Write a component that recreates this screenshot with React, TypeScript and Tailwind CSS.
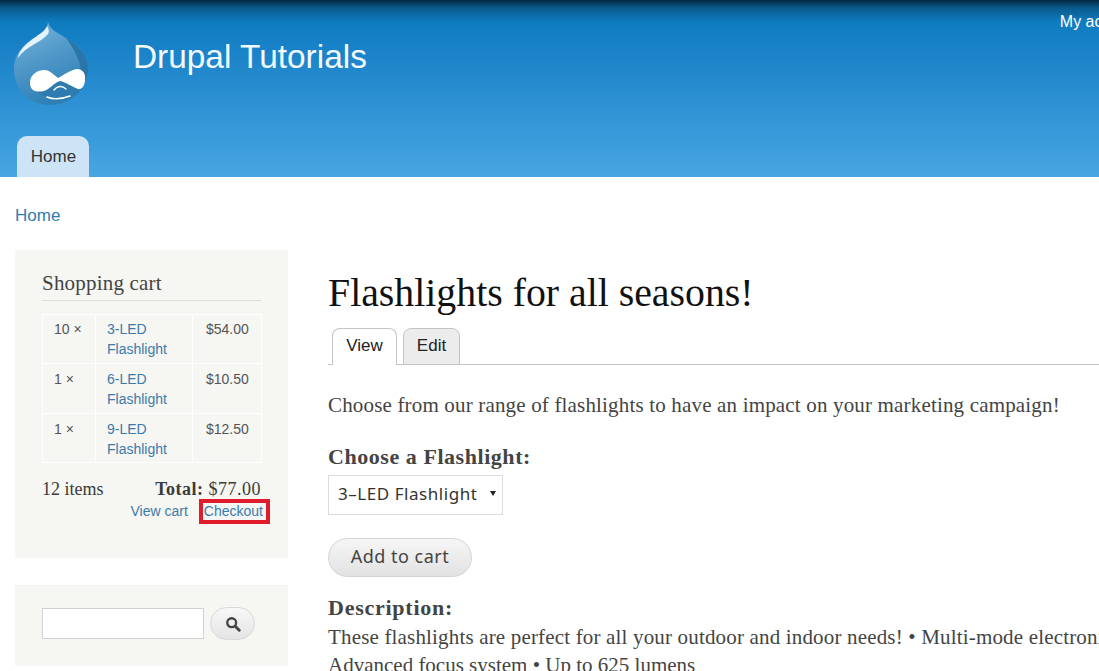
const sans = { fontFamily: '"Liberation Sans", Arial, sans-serif' };
const serif = { fontFamily: '"Liberation Serif", "Times New Roman", serif' };
const noto = { fontFamily: '"Noto Sans", sans-serif' };

function Logo() {
  return (
    <svg width="76" height="86" viewBox="13 20 76 86" className="shrink-0">
      <defs>
        <linearGradient id="dropFill" x1="0" y1="0" x2="0.4" y2="1">
          <stop offset="0" stopColor="#7cb8de" />
          <stop offset="0.5" stopColor="#5199c9" />
          <stop offset="1" stopColor="#2f7fb5" />
        </linearGradient>
      </defs>
      <path d="M48 22C50 30 58 33 66 38C78 45 88 55 88 68C88 90 70 105 51 105C30 105 14 90 14 69C14 52 26 43 36 37C42 33 47 30 48 22Z" fill="url(#dropFill)" />
      <path d="M66 38C78 45 88 55 88 68C88 78 84 86 78 92C84 80 84 62 66 38Z" fill="#2a76a9" />
      <path d="M47 26C44 34 30 38 22 49C19 53 18 56 18 58C26 46 42 42 48 34C50 31 48 28 47 26Z" fill="#e4f2fa" />
      <path d="M35 90C42 100 70 102 80 90C74 87 66 82 60 81C52 84 44 90 35 90Z" fill="#2f7aae" />
      <path d="M30 83C30 74 38 70 44 70C50 70 54 75 58 78C64 75 70 70 77 69C83 69 86 74 85 80C85 85 82 90 78 89C72 87 66 82 60 81C56 82 52 86 48 89C44 92 38 92 35 91C32 90 30 87 30 83Z" fill="#ffffff" />
      <path d="M47 97C54 100 62 99 70 96" fill="none" stroke="#ffffff" strokeWidth="1.6" strokeLinecap="round" />
      <path d="M54 90C57 86 62 85 66 89" fill="none" stroke="#ffffff" strokeWidth="1.4" strokeLinecap="round" />
    </svg>
  );
}

function CartRow({ qty, name, price, first, last }: { qty: string; name: string; price: string; first?: boolean; last?: boolean }) {
  const pad = first ? "pt-[4px]" : "pt-[5px]";
  return (
    <tr className={first || last ? "h-[49px]" : "h-[50px]"}>
      <td className={`border border-white pl-[11px] align-top w-[53px] ${pad}`}>{qty}</td>
      <td className={`border border-white pl-[11px] align-top w-[97px] text-[#3b7bab] ${pad}`}>{name}</td>
      <td className={`border border-white pl-[13px] align-top w-[69px] ${pad}`}>{price}</td>
    </tr>
  );
}

export default function App() {
  return (
    <div className="w-[1099px] h-[671px] overflow-hidden bg-white text-[#3b3b3b]" style={sans}>
      <header className="h-[177px] bg-[linear-gradient(to_bottom,#02283f_0px,#0a5a8c_8px,#0f7cc0_22px,#1a82c8_50px,#48a6e2_177px)] flex flex-col">
        <div className="flex h-[136px] shrink-0">
          <div className="pl-[13px] pt-[20px]"><Logo /></div>
          <div className="ml-[44px] pt-[37px] text-[33.4px] leading-[40px] text-[#f2faff] whitespace-nowrap">Drupal Tutorials</div>
          <div className="ml-[693px] pt-[12px] text-[16px] leading-[20px] text-white whitespace-nowrap shrink-0">My account</div>
        </div>
        <div className="h-[41px] w-[72px] ml-[17px] pl-[1px] rounded-t-[10px] bg-[#cde4f6] text-[17px] leading-[41px] text-center text-[#333]">Home</div>
      </header>

      <div className="pl-[15px] pt-[28px] text-[17px] leading-[22px] text-[#2f7dad]">Home</div>

      <div className="flex mt-[23px]">
        <aside className="w-[273px] ml-[15px] shrink-0">
          <section className="h-[308px] bg-[#f6f6f2] px-[27px] pt-[20px]">
            <h2 className="text-[21px] tracking-[0.2px] leading-[26px] h-[31px] border-b border-[#dcdcd8] text-[#444]" style={serif}>Shopping cart</h2>
            <table className="mt-[13px] w-[219px] border-collapse text-[14px] leading-[20px] text-[#555] table-fixed">
              <tbody>
                <CartRow qty="10 ×" name="3-LED Flashlight" price="$54.00" first />
                <CartRow qty="1 ×" name="6-LED Flashlight" price="$10.50" />
                <CartRow qty="1 ×" name="9-LED Flashlight" price="$12.50" last />
              </tbody>
            </table>
            <div className="flex justify-between mt-[15px] text-[18px] leading-[22px] text-[#3b3b3b]" style={serif}>
              <span>12 items</span>
              <span className="tracking-[0.5px]"><b>Total:</b> $77.00</span>
            </div>
            <div className="flex justify-end items-center -mt-[1px] -mr-[9px] text-[14px] text-[#3b7bab]">
              <span className="mr-[11px]">View cart</span>
              <span className="border-[4px] border-[#e01b2b] bg-[#f4f6f6] pl-[1px] pr-[3px] leading-[16px] h-[25px]">Checkout</span>
            </div>
          </section>
          <section className="h-[81px] mt-[27px] bg-[#f6f6f2] px-[27px] pt-[22px] flex items-start gap-[6px]">
            <div className="w-[162px] h-[31px] mt-[1px] bg-white border border-[#d2d2d2]" />
            <div className="w-[45px] h-[33px] rounded-full border border-[#d8d8d8] bg-[linear-gradient(to_bottom,#f8f8f8,#e4e4e4)] flex items-center justify-center">
              <svg width="16" height="16" viewBox="0 0 18 18"><circle cx="7.5" cy="7.5" r="5" fill="none" stroke="#444" strokeWidth="2.6" /><path d="M11.5 11.5L16 16" stroke="#444" strokeWidth="3.2" strokeLinecap="round" /></svg>
            </div>
          </section>
        </aside>

        <main className="ml-[40px] flex-1 min-w-0" style={serif}>
          <h1 className="text-[39.8px] leading-[44px] mt-[21px] text-[#111] whitespace-nowrap">Flashlights for all seasons!</h1>
          <nav className="flex items-end mt-[13px] h-[37px] border-b border-[#c4c4c4] pl-[4px] gap-[6px] text-[17px]" style={sans}>
            <span className="w-[65px] h-[37px] -mb-px bg-white border border-b-0 border-[#c4c4c4] rounded-t-[8px] text-center leading-[34px] text-[#222]">View</span>
            <span className="w-[57px] h-[37px] -mb-px bg-[#ececec] border border-[#c4c4c4] rounded-t-[8px] text-center leading-[34px] text-[#222]">Edit</span>
          </nav>
          <p className="mt-[28px] text-[21px] tracking-[0.17px] leading-[24px] text-[#444] whitespace-nowrap">Choose from our range of flashlights to have an impact on your marketing campaign!</p>
          <div className="mt-[28px] text-[22px] tracking-[0.55px] leading-[24px] font-bold text-[#444]">Choose a Flashlight:</div>
          <div className="mt-[6px] w-[175px] h-[40px] border border-[#dcdcdc] bg-white flex items-center pl-[9px] pb-[3px] text-[17px] tracking-[0.55px] text-[#333]" style={noto}>
            <span className="flex-1 whitespace-nowrap">3–LED Flashlight</span>
            <svg width="6" height="5" viewBox="0 0 6 5" className="mr-[6px]"><path d="M0 0H6L3 5Z" fill="#222" /></svg>
          </div>
          <div className="mt-[23px] w-[144px] h-[39px] rounded-full border border-[#d4d4d4] bg-[linear-gradient(to_bottom,#f6f6f6,#e2e2e2)] text-center leading-[35px] text-[18px] tracking-[0.5px] text-[#444]" style={noto}>Add to cart</div>
          <div className="mt-[18px] text-[22px] tracking-[0.75px] leading-[26px] font-bold text-[#444]">Description:</div>
          <p className="mt-[2px] text-[21px] tracking-[0.17px] leading-[28px] text-[#444] whitespace-nowrap">These flashlights are perfect for all your outdoor and indoor needs! • Multi-mode electronic switch •</p>
          <p className="text-[21px] leading-[28px] text-[#444] whitespace-nowrap">Advanced focus system • Up to 625 lumens</p>
        </main>
      </div>
    </div>
  );
}
